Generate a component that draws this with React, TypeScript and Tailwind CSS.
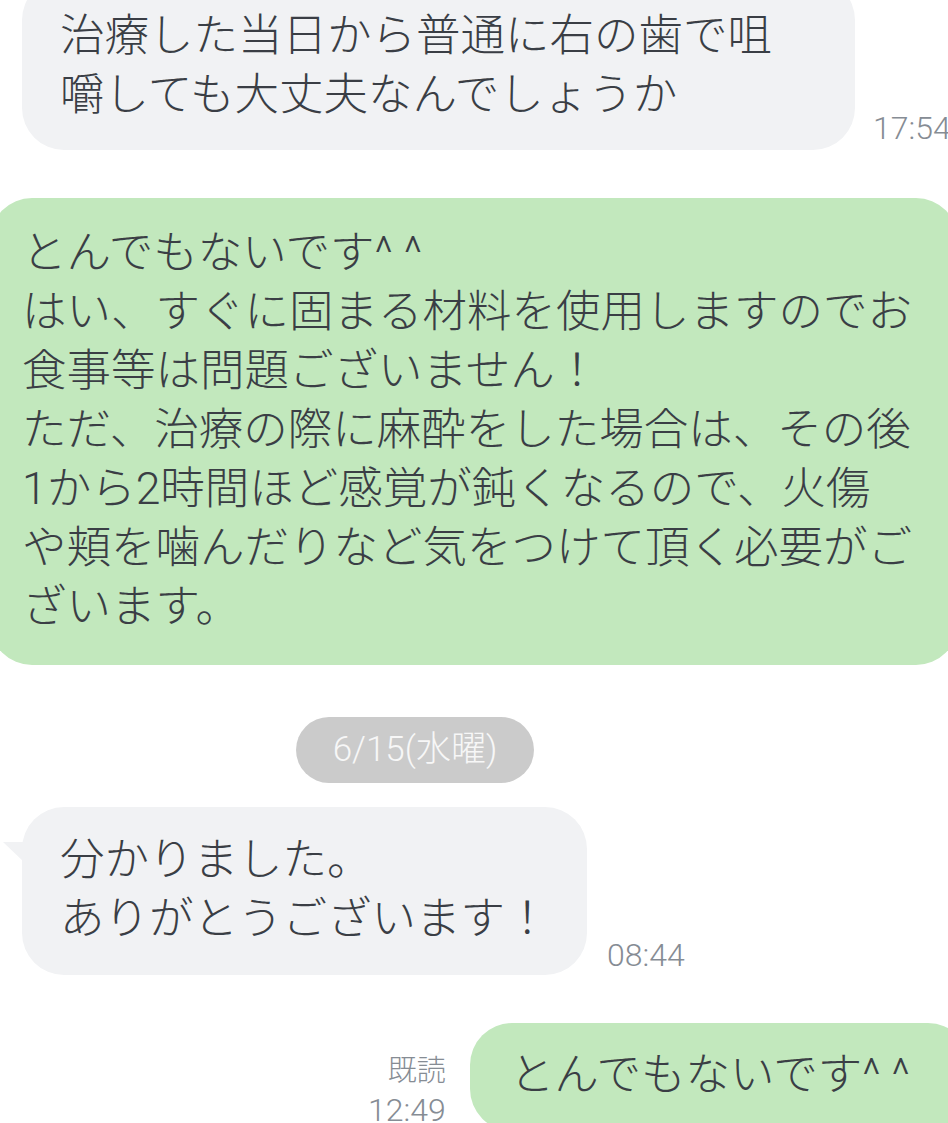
const font = "font-['Roboto','Noto_Sans_CJK_JP',sans-serif]";

function Time({ children }: { children: React.ReactNode }) {
  return <div className="text-[32px] leading-[38px] font-light text-[#868c94] whitespace-nowrap">{children}</div>;
}

export default function App() {
  return (
    <div className={`w-[948px] h-[1123px] overflow-hidden bg-white ${font}`}>
      {/* incoming message, top cut off */}
      <div className="flex items-end -mt-[22px]">
        <div className="ml-[22px] w-[833px] shrink-0 rounded-[42px] bg-[#f1f2f4] pl-[38px] pt-[29px] pb-[25px] text-[44.5px] leading-[59px] font-light text-[#3a3e45] whitespace-nowrap">
          治療した当日から普通に右の歯で咀
          <br />
          嚼しても大丈夫なんでしょうか
        </div>
        <div className="ml-[18px] mb-[3px]">
          <Time>17:54</Time>
        </div>
      </div>

      {/* outgoing reply */}
      <div className="mt-[48px] -ml-[10px] w-[968px] rounded-[42px] bg-[#c2e8bd] pl-[32px] pt-[26px] pb-[28px] text-[44.5px] leading-[59px] font-light text-[#3a3e45] whitespace-nowrap">
        とんでもないです^ ^
        <br />
        はい、すぐに固まる材料を使用しますのでお
        <br />
        食事等は問題ございません！
        <br />
        ただ、治療の際に麻酔をした場合は、その後
        <br />
        1から2時間ほど感覚が鈍くなるので、火傷
        <br />
        や頬を噛んだりなど気をつけて頂く必要がご
        <br />
        ざいます。
      </div>

      {/* date separator */}
      <div className="mt-[52px] ml-[296px] flex h-[66px] w-[238px] items-center justify-center rounded-full bg-[#cbcbcb] text-[35px] font-light text-[#f7f7f7]">
        6/15(水曜)
      </div>

      {/* incoming message with tail */}
      <div className="mt-[24px] flex items-end">
        <div className="relative ml-[22px] w-[565px] shrink-0 rounded-[42px] bg-[#f1f2f4] pl-[38px] pt-[24px] pb-[26px] text-[44.5px] leading-[59px] font-light text-[#3a3e45] whitespace-nowrap">
          <svg className="absolute -left-[19px] top-[35px]" width="24" height="22" viewBox="0 0 24 22">
            <path d="M0 0 L24 0 L22 21 Z" fill="#f1f2f4" />
          </svg>
          分かりました。
          <br />
          ありがとうございます！
        </div>
        <div className="ml-[20px] mb-[1px]">
          <Time>08:44</Time>
        </div>
      </div>

      {/* outgoing, read */}
      <div className="mt-[48px] flex items-start">
        <div className="ml-[368px] mt-[28px] flex w-[87px] flex-col items-end">
          <div className="text-[29px] leading-[40px] font-light text-[#868c94]">既読</div>
          <Time>12:49</Time>
        </div>
        <div className="ml-[24px] w-[500px] shrink-0 rounded-[42px] bg-[#c2e8bd] pl-[40px] pt-[23px] pb-[26px] text-[44.5px] leading-[59px] font-light text-[#3a3e45] whitespace-nowrap">
          とんでもないです^ ^
        </div>
      </div>
    </div>
  );
}
